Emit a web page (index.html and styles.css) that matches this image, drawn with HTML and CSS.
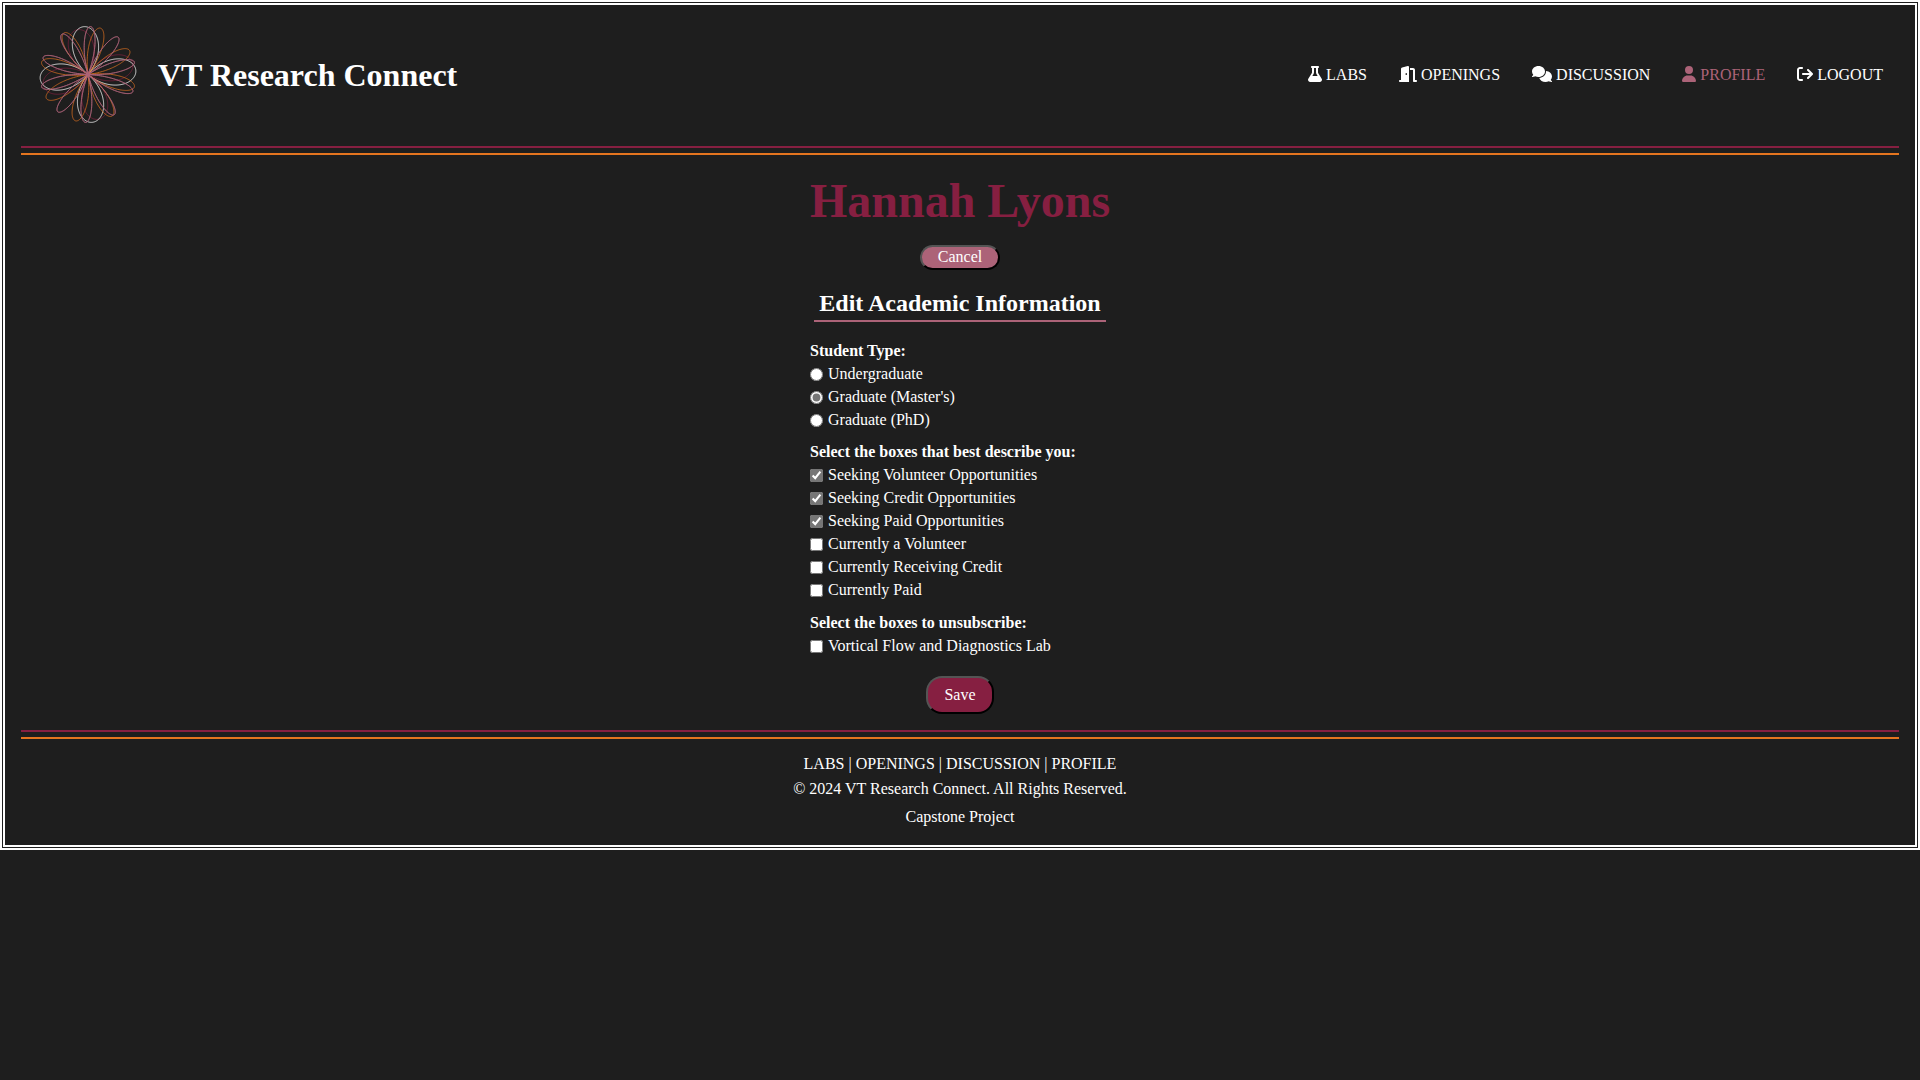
FILE: index.html
```
<!DOCTYPE html>
<html lang="en">
<head>
<meta charset="utf-8">
<title>VT Research Connect</title>
<link rel="stylesheet" href="styles.css">
</head>
<body>
<header class="site-header">
  <div class="brand">
    <svg class="logo" id="logo" viewBox="-60 -59.5 120 120" aria-hidden="true"></svg>
    <h1 class="brand-name">VT Research Connect</h1>
  </div>
  <nav class="main-nav">
    <a href="#"><svg class="icon icon-14" viewBox="0 0 448 512"><path d="M288 0H160 128C110.300 0 96 14.300 96 32s14.300 32 32 32V196.800c0 11.800-3.300 23.500-9.500 33.500L10.300 406.200C3.600 417.200 0 429.700 0 442.600C0 480.900 31.100 512 69.400 512H378.600c38.300 0 69.400-31.100 69.400-69.400c0-12.800-3.600-25.400-10.300-36.400L329.500 230.400c-6.200-10.100-9.500-21.700-9.500-33.500V64c17.700 0 32-14.300 32-32s-14.300-32-32-32H288zM192 196.800V64h64V196.800c0 23.700 6.600 46.900 19 67.100L309.500 320h-171L173 263.900c12.400-20.200 19-43.400 19-67.100z"/></svg> LABS</a>
    <a href="#"><svg class="icon icon-18" viewBox="0 0 576 512"><path d="M320 32c0-9.900-4.500-19.200-12.300-25.200S289.800-1.400 280.200 1l-179.900 45C79 51.300 64 70.500 64 92.500V448H32c-17.700 0-32 14.300-32 32s14.300 32 32 32H96 288h32V480 32zM256 256c0 17.700-10.700 32-24 32s-24-14.300-24-32s10.700-32 24-32s24 14.300 24 32zm96-128h96V480c0 17.700 14.300 32 32 32h64c17.700 0 32-14.300 32-32s-14.300-32-32-32H512V128c0-35.300-28.700-64-64-64H352v64z"/></svg> OPENINGS</a>
    <a href="#"><svg class="icon icon-20" viewBox="0 0 640 512"><path d="M208 352c114.900 0 208-78.800 208-176S322.900 0 208 0S0 78.800 0 176c0 38.600 14.700 74.300 39.600 103.400c-3.500 9.400-8.700 17.700-14.200 24.700c-4.800 6.200-9.700 11-13.300 14.300c-1.800 1.600-3.300 2.900-4.300 3.700c-.5 .4-.9 .7-1.100 .8l-.2 .2C1 327.200-1.400 334.400.8 340.900S9.100 352 16 352c21.800 0 43.800-5.600 62.100-12.500c9.200-3.500 17.800-7.400 25.200-11.400C134.100 343.300 169.800 352 208 352zM448 176c0 112.300-99.100 196.900-216.500 207C255.800 457.400 336.400 512 432 512c38.200 0 73.900-8.700 104.700-23.900c7.500 4 16 7.900 25.200 11.400c18.300 6.900 40.300 12.500 62.100 12.500c6.900 0 13.100-4.500 15.200-11.100c2.100-6.600-.2-13.800-5.800-17.900l-.2-.2c-.2-.2-.6-.4-1.100-.8c-1-.8-2.500-2-4.300-3.700c-3.600-3.300-8.500-8.100-13.300-14.300c-5.500-7-10.700-15.400-14.200-24.700c24.900-29 39.600-64.700 39.600-103.400c0-92.800-84.900-168.900-192.600-175.500c.4 5.100 .6 10.300 .6 15.500z"/></svg> DISCUSSION</a>
    <a href="#" class="active"><svg class="icon icon-14" viewBox="0 0 448 512"><path d="M224 256A128 128 0 1 0 224 0a128 128 0 1 0 0 256zm-45.700 48C79.800 304 0 383.800 0 482.300C0 498.700 13.300 512 29.700 512H418.300c16.400 0 29.700-13.300 29.700-29.700C448 383.800 368.200 304 269.700 304H178.300z"/></svg> PROFILE</a>
    <a href="#"><svg class="icon icon-16" viewBox="0 0 512 512"><path d="M502.600 278.600c12.500-12.500 12.500-32.800 0-45.300l-128-128c-12.500-12.500-32.800-12.500-45.300 0s-12.500 32.800 0 45.300L402.700 224H192c-17.700 0-32 14.300-32 32s14.300 32 32 32H402.700l-73.400 73.400c-12.500 12.500-12.500 32.800 0 45.300s32.800 12.500 45.300 0l128-128zM160 96c17.700 0 32-14.300 32-32s-14.300-32-32-32H96C43 32 0 75 0 128V384c0 53 43 96 96 96h64c17.700 0 32-14.300 32-32s-14.300-32-32-32H96c-17.700 0-32-14.300-32-32V128c0-17.700 14.300-32 32-32h64z"/></svg> LOGOUT</a>
  </nav>
</header>
<div class="divider"></div>
<main class="profile">
  <h1 class="name">Hannah Lyons</h1>
  <button type="button" class="btn cancel">Cancel</button>
  <h2 class="section-title">Edit Academic Information</h2>
  <form class="form">
    <fieldset>
      <legend>Student Type:</legend>
      <label><input type="radio" name="type">Undergraduate</label>
      <label><input type="radio" name="type" checked>Graduate (Master's)</label>
      <label><input type="radio" name="type">Graduate (PhD)</label>
    </fieldset>
    <fieldset>
      <legend>Select the boxes that best describe you:</legend>
      <label><input type="checkbox" checked>Seeking Volunteer Opportunities</label>
      <label><input type="checkbox" checked>Seeking Credit Opportunities</label>
      <label><input type="checkbox" checked>Seeking Paid Opportunities</label>
      <label><input type="checkbox">Currently a Volunteer</label>
      <label><input type="checkbox">Currently Receiving Credit</label>
      <label><input type="checkbox">Currently Paid</label>
    </fieldset>
    <fieldset>
      <legend>Select the boxes to unsubscribe:</legend>
      <label><input type="checkbox">Vortical Flow and Diagnostics Lab</label>
    </fieldset>
    <button type="button" class="btn save">Save</button>
  </form>
</main>
<div class="divider"></div>
<footer class="site-footer">
  <p class="links"><a href="#">LABS</a> | <a href="#">OPENINGS</a> | <a href="#">DISCUSSION</a> | <a href="#">PROFILE</a></p>
  <p class="copyright">© 2024 VT Research Connect. All Rights Reserved.</p>
  <p>Capstone Project</p>
</footer>
<script src="logo.js"></script>
</body>
</html>
```
FILE: styles.css
```
* { box-sizing: border-box; }
html { background: #1e1e1e; }
body {
  margin: 0;
  height: 850px;
  padding: 16px;
  border: 5px double #fff;
  background: #1e1e1e;
  color: #fff;
  font: 16px/18px "Liberation Serif", "Times New Roman", serif;
}
h1, h2, p { margin: 0; }
a { color: inherit; text-decoration: none; }

.site-header {
  display: flex;
  align-items: center;
  justify-content: space-between;
  height: 125px;
  padding: 0 16px 17px 7px;
}
.brand { display: flex; align-items: center; gap: 10px; }
.logo { width: 120px; height: 120px; fill: none; }
.brand-name { font-size: 32px; line-height: 37px; }
.main-nav { display: flex; gap: 32px; }
.main-nav .active { color: #ac6378; }
.icon { height: 16px; fill: currentColor; vertical-align: -2px; }
.icon-14 { width: 14px; }
.icon-16 { width: 16px; }
.icon-18 { width: 18px; }
.icon-20 { width: 20px; }

.divider {
  height: 9px;
  border-top: 2px solid #861f41;
  border-bottom: 2px solid #e5751f;
}

.profile { display: flex; flex-direction: column; align-items: center; height: 575px; }
.name {
  margin-top: 18px;
  font-size: 48px;
  line-height: 55px;
  color: #861f41;
}
.btn { font: inherit; color: #fff; border: 2px outset #000; }
.cancel {
  width: 80px;
  height: 25px;
  margin-top: 17px;
  padding: 0 0 1px;
  border-radius: 16px;
  background: #ac6378;
}
.section-title {
  margin-top: 20px;
  height: 32px;
  padding: 0 5px;
  border-bottom: 2px solid #ac6378;
  font-size: 24px;
  line-height: 27px;
}
.form { display: flex; flex-direction: column; width: 300px; margin-top: 17px; }
fieldset { margin: 0 0 9px; padding: 0; border: 0; }
fieldset + fieldset { margin-bottom: 10px; }
legend { height: 23px; padding: 3px 0 0; font-weight: bold; }
label { display: flex; align-items: flex-start; height: 23px; padding-top: 3px; }
input { width: 13px; height: 13px; margin: 3px 5px 0 0; accent-color: #767676; }
.save {
  align-self: center;
  width: 68px;
  height: 38px;
  margin-top: 9px;
  padding: 0;
  border-radius: 16px;
  background: #861f41;
}

.site-footer { padding-top: 16px; text-align: center; }
.links { margin-bottom: 7px; }
.copyright { margin-bottom: 10px; }
```
FILE: logo.js
```
const svg = document.getElementById('logo');
// Each curve is a polar rose r = a * cos(k * t), turned by rot degrees.
const roses = [
  { k: 2, a: 46, rot: -14, color: '#861f41', alpha: 0.7 },
  { k: 2, a: 48, rot: -5, color: '#ffffff', alpha: 0.8 },
  { k: 4, a: 48, rot: -30, color: '#e5751f', alpha: 0.7 },
  { k: 5, a: 48, rot: -15, color: '#ac6378', alpha: 0.7 },
  { k: 5, a: 48, rot: 21, color: '#ac6378', alpha: 0.7 }
];
for (const rose of roses) {
  let d = '';
  for (let i = 0; i <= 720; i++) {
    const t = i * Math.PI / 360;
    const r = rose.a * Math.cos(rose.k * t);
    const u = t + rose.rot * Math.PI / 180;
    d += (i ? 'L' : 'M') + (r * Math.cos(u)).toFixed(2) + ' ' + (r * Math.sin(u)).toFixed(2);
  }
  const path = document.createElementNS('http://www.w3.org/2000/svg', 'path');
  path.setAttribute('d', d);
  path.setAttribute('stroke', rose.color);
  path.setAttribute('stroke-opacity', rose.alpha);
  svg.appendChild(path);
}
```
